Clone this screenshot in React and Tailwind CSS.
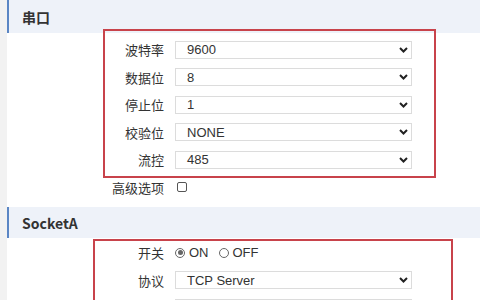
import React from "react";

const cn = '"Noto Sans CJK SC", "Liberation Sans", sans-serif';

const Chevron = () => (
  <svg width="9" height="6" viewBox="0 0 9 6" className="shrink-0">
    <path d="M1 1 L4.5 4.5 L8 1" fill="none" stroke="#222" strokeWidth="2" />
  </svg>
);

const Row = ({ label, children }) => (
  <div className="flex items-center h-[27.5px]">
    <div className="w-[157px] text-right text-[13px] text-[#333]" style={{ fontFamily: cn }}>
      {label}
    </div>
    <div className="ml-[11px] flex items-center">{children}</div>
  </div>
);

const Select = ({ value }) => (
  <div className="w-[237px] h-[18px] border border-[#dcdcdc] bg-white flex items-center justify-between pl-[11px] pr-[3px] text-[13px] text-[#333]" style={{ fontFamily: '"Liberation Sans", sans-serif' }}>
    <span>{value}</span>
    <Chevron />
  </div>
);

const Header = ({ title, h }) => (
  <div className={`${h} bg-[#eef2f9] border-l-2 border-[#5b86c4] flex items-center pl-[13px] pt-[2px] text-[14px] font-bold text-[#333]`} style={{ fontFamily: cn }}>
    {title}
  </div>
);

const Radio = ({ checked, label }) => (
  <div className="flex items-center gap-[4px] text-[13px] text-[#333]" style={{ fontFamily: '"Liberation Sans", sans-serif' }}>
    <span className="w-[10px] h-[10px] rounded-full border border-[#666] flex items-center justify-center">
      {checked && <span className="w-[5px] h-[5px] rounded-full bg-[#666]" />}
    </span>
    <span>{label}</span>
  </div>
);

export default function App() {
  return (
    <div className="relative w-[480px] h-[300px] overflow-hidden bg-white flex flex-col">
      <div className="h-[3px] bg-[#3f80d2]" />
      <div className="flex flex-1">
        <div className="w-[7px] bg-[#f2f2f2]" />
        <div className="flex-1 flex flex-col">
          <Header title="串口" h="h-[33px]" />
          <div className="pt-[3px]">
            <Row label="波特率"><Select value="9600" /></Row>
            <Row label="数据位"><Select value="8" /></Row>
            <Row label="停止位"><Select value="1" /></Row>
            <Row label="校验位"><Select value="NONE" /></Row>
            <Row label="流控"><Select value="485" /></Row>
            <Row label="高级选项">
              <span className="ml-[2px] w-[10px] h-[10px] rounded-[2px] border border-[#555] bg-white" />
            </Row>
          </div>
          <div className="mt-[6px]">
            <Header title="SocketA" h="h-[31px]" />
          </div>
          <div className="pt-[1px]">
            <Row label="开关">
              <div className="flex items-center gap-[10px]">
                <Radio checked label="ON" />
                <Radio label="OFF" />
              </div>
            </Row>
            <Row label="协议"><Select value="TCP Server" /></Row>
            <Row label=""><Select value="" /></Row>
          </div>
        </div>
      </div>
      <div className="absolute left-[103px] top-[29px] w-[333px] h-[149px] border-2 border-[#c8434b]" />
      <div className="absolute left-[93px] top-[239px] w-[360px] h-[100px] border-2 border-[#c8434b]" />
    </div>
  );
}
